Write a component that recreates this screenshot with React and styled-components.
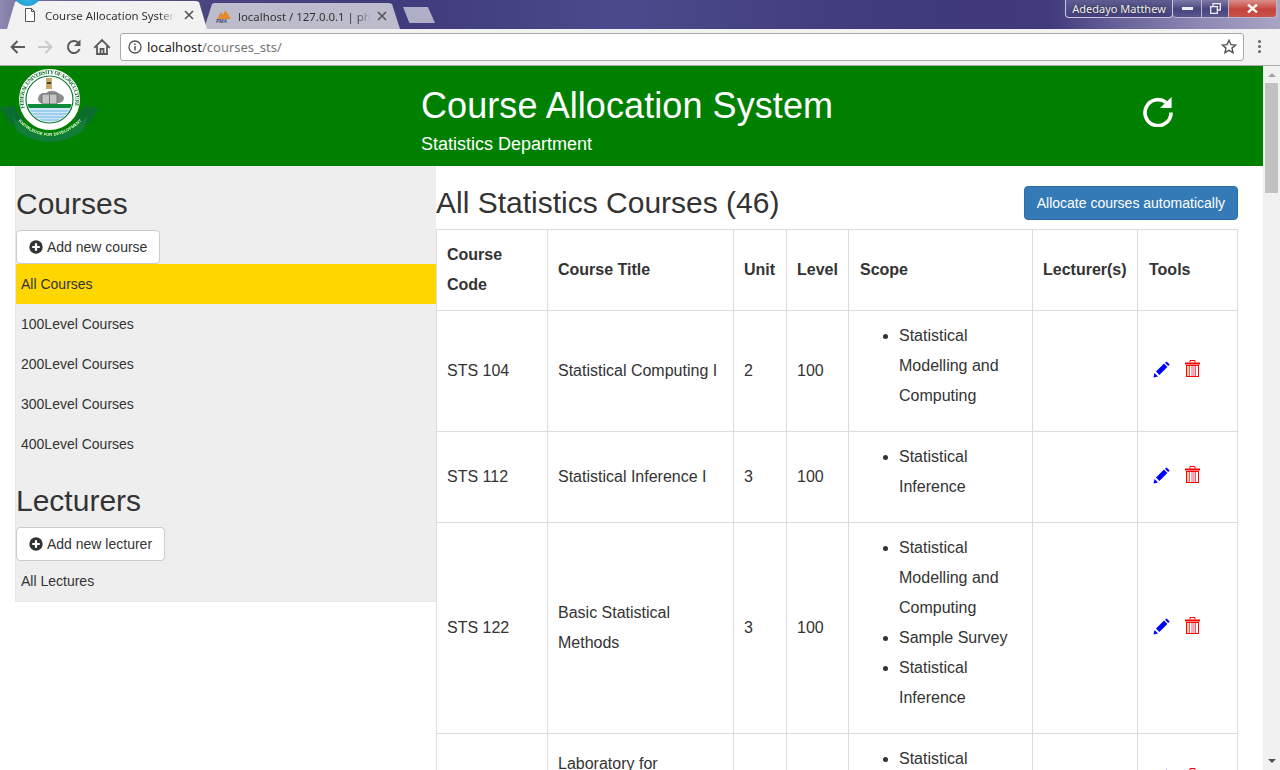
import React from "react";
import styled, { createGlobalStyle } from "styled-components";

const Global = createGlobalStyle`
  html, body { margin: 0; padding: 0; height: 100%; overflow: hidden; background: #fff; }
  * { box-sizing: border-box; }
  #root { height: 100%; }
`;

const Frame = styled.div`
  width: 1280px; height: 770px; overflow: hidden; display: flex; flex-direction: column;
  font-family: "Liberation Sans", Arial, sans-serif; color: #333;
`;
const TitleBar = styled.div`
  position: relative; height: 29px; flex: none; display: flex; align-items: flex-end; padding-left: 7px;
  background: linear-gradient(90deg, #8d89b0 0, #6f6a9e 30px, #4a4580 210px, #3f3b7c 400px, #4c4a8c 620px, #3f3a7a 900px, #40397c 1050px, #68639a 1120px, #8d88b4 1200px, #a9a5c4 1280px);
`;
const Orb = styled.div`
  position: absolute; left: 13px; top: -23px; width: 29px; height: 29px; border-radius: 50%; z-index: 3;
  background: radial-gradient(circle at 50% 70%, #35b6e6, #0f7fb8);
`;
const Tab = styled.div`
  position: relative; height: ${p => p.$active ? 28 : 26}px; width: ${p => p.$active ? 200 : 196}px;
  margin-left: ${p => p.$active ? 0 : -3}px; padding: 0 13px 0 ${p => p.$active ? 17 : 12}px;
  display: flex; align-items: center; gap: ${p => p.$active ? 9 : 6}px;
  clip-path: polygon(0 100%, 8px 4%, 10px 0, calc(100% - 11px) 0, calc(100% - 8px) 4%, 100% 100%);
  background: ${p => p.$active ? "#f2f2f2" : "#bdbccd"};
  z-index: ${p => p.$active ? 2 : 1};
  font: 11.4px "Noto Sans", "Open Sans", sans-serif; color: #333;
`;
const TabLabel = styled.span`
  flex: 1; min-width: 0; white-space: nowrap; overflow: hidden;
  -webkit-mask-image: linear-gradient(90deg, #000 88%, transparent 100%);
  mask-image: linear-gradient(90deg, #000 88%, transparent 100%);
`;
const NewTab = styled.div`
  width: 32px; height: 16px; margin: 0 0 6px 3px; background: #aeaec6;
  clip-path: polygon(0 0, 78% 0, 100% 100%, 20% 100%);
`;
const Spacer = styled.div`flex: 1;`;
const WinGroup = styled.div`
  align-self: flex-start; display: flex; height: 18px; margin-right: 3px;
`;
const UserBadge = styled.div`
  width: 108px; height: 18px; border: 1px solid #c9c8dc; border-top: none; border-radius: 0 0 4px 4px;
  background: linear-gradient(#5f5c92, #44417e);
  font: 11px "Noto Sans", sans-serif; color: #eee; text-align: center; line-height: 17px;
  text-shadow: 0 0 3px #222;
`;
const WinBtn = styled.div`
  width: ${p => p.$w}px; height: 18px; border: 1px solid #b9b8d0; border-top: none; border-left: none;
  border-radius: 0 0 ${p => p.$end ? 4 : 0}px ${p => p.$first ? 4 : 0}px;
  display: flex; align-items: center; justify-content: center;
  background: ${p => p.$close ? "linear-gradient(#d9908a 0, #c6443a 55%, #c9524a 100%)" : "linear-gradient(#7d7aa6, #47447f 55%, #5a578d)"};
`;
const Toolbar = styled.div`
  height: 37px; flex: none; display: flex; align-items: center; padding: 0 6px 1px 0;
  background: #f2f2f2; border-bottom: 1px solid #a9a9a9;
`;
const NavIcon = styled.svg`
  width: 18px; height: 18px; flex: none; margin-left: ${p => p.$ml}px;
`;
const Omnibox = styled.div`
  margin-left: ${p => p.$ml}px; width: 1124px; height: 28px; display: flex; align-items: center; padding: 0 6px 0 7px; gap: 5px;
  background: #fff; border: 1px solid #a9a9a9; border-radius: 3px;
  font: 13px "Noto Sans", "Open Sans", sans-serif; color: #777;
`;
const Host = styled.span`color: #222;`;
const Url = styled.span`flex: 1;`;
const Dots = styled.div`
  margin-left: 14px; display: flex; flex-direction: column; gap: 2px;
  & > i { width: 3px; height: 3px; border-radius: 50%; background: #666; display: block; }
`;
const Viewport = styled.div`flex: 1; min-height: 0; display: flex;`;
const Page = styled.div`flex: 1; min-width: 0; overflow: hidden;`;
const Scrollbar = styled.div`
  width: 17px; flex: none; background: #f1f1f1; display: flex; flex-direction: column; align-items: center; justify-content: space-between; position: relative;
`;
const ArrowBtn = styled.div`
  width: 0; height: 0; margin: 7px 0; border-left: 4px solid transparent; border-right: 4px solid transparent;
  ${p => p.$up ? "border-bottom: 4px solid #a3a3a3;" : "border-top: 4px solid #505050;"}
`;
const Thumb = styled.div`
  position: absolute; left: 2px; top: 17px; width: 13px; height: 110px; background: #c1c1c1;
`;
const Banner = styled.header`
  height: 100px; background: #008000; display: flex; color: #fff;
`;
const LogoBox = styled.div`width: 421px; flex: none; padding-top: 1px;`;
const BannerText = styled.div`width: 722px; flex: none; padding-top: 20px;`;
const BannerTitle = styled.h1`
  margin: 0; font-size: 36px; font-weight: 400; line-height: 40px; letter-spacing: 0.08px;
`;
const BannerSub = styled.div`
  margin-top: 8px; font-size: 18px; line-height: 20px;
`;
const RefreshBox = styled.div`padding-top: 31px;`;
const Body = styled.div`display: flex; align-items: flex-start; padding-left: 15px;`;
const Sidebar = styled.aside`
  width: 421px; flex: none; background: #eee; border: 1px solid #e7e7e7; border-right: none; border-top-color: #eee;
`;
const SideTitle = styled.h2`
  margin: 20px 0 10px; padding-left: 0; font-size: 30px; font-weight: 500; line-height: 33px; color: #333;
`;
const Btn = styled.button`
  display: inline-flex; align-items: center; height: 34px; padding: 0 12px; gap: 4px; vertical-align: top;
  font: 14px "Liberation Sans", Arial, sans-serif; color: #333; background: #fff;
  border: 1px solid #ccc; border-radius: 4px; margin: 0;
`;
const PrimaryBtn = styled(Btn)`
  background: #337ab7; border-color: #2e6da4; color: #fff;
`;
const SideItem = styled.div`
  height: 40px; padding-left: 5px; font-size: 14px; line-height: 40px; color: #333;
  background: ${p => p.$active ? "#ffd700" : "transparent"};
`;
const Main = styled.main`width: 802px; flex: none; padding-top: 20px;`;
const MainHead = styled.div`
  display: flex; justify-content: space-between; align-items: center; height: 34px; margin-bottom: 9px;
`;
const MainTitle = styled.h2`
  margin: 0 0 2px; font-size: 30px; font-weight: 500; line-height: 33px; color: #333;
`;
const Table = styled.table`
  width: 801px; table-layout: fixed; border-collapse: collapse; font-size: 16px; line-height: 30px; color: #333;
`;
const Th = styled.th`
  border: 1px solid #ddd; padding: 10px; text-align: left; font-weight: 700; vertical-align: middle;
  padding-left: ${p => p.$nudge ? 11 : 10}px;
`;
const Td = styled.td`
  border: 1px solid #ddd; padding: 10px; vertical-align: middle;
`;
const Scope = styled.ul`margin: 0 0 10px; padding-left: 40px;`;
const Tools = styled.div`display: flex; align-items: center; gap: 15px; padding: 0 0 4px 5px;`;

const Pencil = () => (
  <svg width="17" height="17" viewBox="0 0 17 17" style={{ flex: "none" }}>
    <path d="M0.5 16.5 L1.5 12 L5 15.5 Z" fill="#00f" />
    <path d="M3 10.6 L11 2.6 L14.4 6 L6.4 14 Z" fill="#00f" />
    <path d="M12 1.8 L13.6 0.4 L16.6 3.4 L15.2 5 Z" fill="#00f" />
  </svg>
);
const Trash = () => (
  <svg width="15" height="18" viewBox="0 0 15 18" style={{ flex: "none" }}>
    <path d="M5 2.5 V0.5 H10 V2.5" fill="none" stroke="#f00" />
    <rect x="0" y="2.5" width="15" height="2" fill="#f00" />
    <rect x="1.5" y="5.5" width="12" height="11" fill="#fff" stroke="#f00" />
    <path d="M3 6 V16" stroke="#fdc48c" strokeWidth="1.4" />
    <path d="M4.5 6 V16 M7 6 V16 M10.5 6 V16" stroke="#f55" strokeWidth="1" />
    <path d="M8.8 6 V16" stroke="#f9c" strokeWidth="1.6" />
  </svg>
);
const PlusSign = () => (
  <svg width="14" height="14" viewBox="0 0 14 14" style={{ flex: "none", marginTop: -1 }}>
    <circle cx="7" cy="7" r="6.7" fill="#333" />
    <path d="M7 3.2 V10.8 M3.2 7 H10.8" stroke="#fff" strokeWidth="2.2" />
  </svg>
);
const Refresh = () => (
  <svg width="30" height="30" viewBox="0 0 30 30" style={{ display: "block" }}>
    <path d="M28 15.5 A13 13 0 1 1 23 5.4" fill="none" stroke="#fff" strokeWidth="3.6" />
    <path d="M28.6 0 V11 H17 Z" fill="#fff" />
  </svg>
);
const Logo = () => (
  <svg width="100" height="76" viewBox="0 0 100 76" style={{ display: "block", filter: "blur(0.35px)" }}>
    <defs>
      <path id="ringPath" d="M 24.76 41 A 26 26 0 1 1 74.24 41" />
      <path id="ribbonPath" d="M 16 52 Q 49 86 84 52" />
      <clipPath id="lens"><circle cx="49.5" cy="32.5" r="22.5" /></clipPath>
    </defs>
    <path d="M0 40 L14 39 L24 53 L16 60 L9 55 Z" fill="#0c6e2e" />
    <path d="M99 41 L85 39 L75 53 L83 60 L90 55 Z" fill="#0c6e2e" />
    <path d="M12 49 Q49 90 88 49 L83 64 Q49 86 17 64 Z" fill="#127d38" />
    <circle cx="49.5" cy="32.5" r="30.5" fill="#fff" />
    <circle cx="49.5" cy="32.5" r="23.5" fill="#fff" stroke="#0a7a30" strokeWidth="1.2" />
    <text fontFamily="Liberation Serif, serif" fontSize="5.6" fontWeight="700" fill="#126b2f">
      <textPath href="#ringPath" textLength="96">FEDERAL UNIVERSITY OF AGRICULTURE</textPath>
    </text>
    <g clipPath="url(#lens)">
      <rect x="46" y="11" width="6" height="11" fill="#c8a96a" />
      <rect x="47" y="15" width="4" height="2" fill="#443" />
      <path d="M38 33 Q38 25 46 26 Q52 21 60 27 Q66 29 63 34 L60 36 H40 Z" fill="#8d8d8d" />
      <rect x="42" y="27" width="15" height="10" fill="#c5c5c5" stroke="#666" strokeWidth="0.8" />
      <path d="M49.5 27 V37" stroke="#666" strokeWidth="0.8" />
      <rect x="24" y="37" width="52" height="4" fill="#0f8a3a" />
      <rect x="24" y="41" width="52" height="16" fill="#cfe6f6" />
      <path d="M28 44 H71 M28 47 H71 M30 50 H69 M34 53 H65" stroke="#6cb4e4" strokeWidth="1" />
    </g>
    <text fontFamily="Liberation Sans, sans-serif" fontSize="4.2" fontWeight="700" fill="#e8f4ea">
      <textPath href="#ribbonPath" startOffset="4%" textLength="72">KNOWLEDGE FOR DEVELOPMENT</textPath>
    </text>
  </svg>
);

const rows = [
  { code: "STS 104", title: "Statistical Computing I", unit: 2, level: 100, scope: ["Statistical Modelling and Computing"] },
  { code: "STS 112", title: "Statistical Inference I", unit: 3, level: 100, scope: ["Statistical Inference"] },
  { code: "STS 122", title: "Basic Statistical Methods", unit: 3, level: 100, scope: ["Statistical Modelling and Computing", "Sample Survey", "Statistical Inference"] },
  { code: "STS 124", title: "Laboratory for Statistical", unit: 1, level: 100, scope: ["Statistical Computing"] },
];
const widths = [111, 186, 53, 62, 184, 105, 100];
const levels = ["All Courses", "100Level Courses", "200Level Courses", "300Level Courses", "400Level Courses"];

export default function App() {
  return (
    <Frame>
      <Global />
      <TitleBar>
        <Orb />
        <Tab $active>
          <svg width="12" height="14" viewBox="0 0 12 14" style={{ flex: "none" }}>
            <path d="M1.5 0.5 H7.5 L10.5 3.5 V13.5 H1.5 Z M7.5 0.5 V3.5 H10.5" fill="#fff" stroke="#555" />
          </svg>
          <TabLabel>Course Allocation System</TabLabel>
          <svg width="10" height="10" viewBox="0 0 10 10" style={{ flex: "none" }}>
            <path d="M1 1 L9 9 M9 1 L1 9" stroke="#555" strokeWidth="1.6" />
          </svg>
        </Tab>
        <Tab>
          <svg width="16" height="13" viewBox="0 0 16 13" style={{ flex: "none" }}>
            <path d="M1 9 L5 2 L7 5 L9 0.5 L12 4 L15 9 Z" fill="#e28a2c" />
            <text x="0" y="13" fontSize="5" fontWeight="700" fontStyle="italic" fontFamily="Liberation Sans" fill="#3a4c80">PMA</text>
          </svg>
          <TabLabel>localhost / 127.0.0.1 | phpMyAdmin</TabLabel>
          <svg width="10" height="10" viewBox="0 0 10 10" style={{ flex: "none" }}>
            <path d="M1 1 L9 9 M9 1 L1 9" stroke="#555" strokeWidth="1.6" />
          </svg>
        </Tab>
        <NewTab />
        <Spacer />
        <WinGroup>
          <UserBadge>Adedayo Matthew</UserBadge>
          <WinBtn $w={29} $first>
            <svg width="11" height="5" viewBox="0 0 11 5"><rect y="1" width="11" height="3" fill="#eee" /></svg>
          </WinBtn>
          <WinBtn $w={27}>
            <svg width="11" height="11" viewBox="0 0 11 11"><path d="M3 3 V0.7 H10.3 V7 H8 M0.7 3.7 H7.3 V10.3 H0.7 Z" fill="none" stroke="#eee" strokeWidth="1.3" /></svg>
          </WinBtn>
          <WinBtn $w={48} $close $end>
            <svg width="11" height="9" viewBox="0 0 11 9"><path d="M1 0.5 L10 8.5 M10 0.5 L1 8.5" stroke="#f4f4f4" strokeWidth="2.4" /></svg>
          </WinBtn>
        </WinGroup>
      </TitleBar>
      <Toolbar>
        <NavIcon $ml={9} viewBox="0 0 18 18"><path d="M16 9 H3 M8.5 3 L2.6 9 L8.5 15" fill="none" stroke="#5a5a5a" strokeWidth="2" /></NavIcon>
        <NavIcon $ml={9} viewBox="0 0 18 18"><path d="M2 9 H15 M9.5 3 L15.4 9 L9.5 15" fill="none" stroke="#c9c9c9" strokeWidth="2" /></NavIcon>
        <NavIcon $ml={11} viewBox="0 0 18 18">
          <path d="M14.6 11 A6 6 0 1 1 13.2 4.8" fill="none" stroke="#5a5a5a" strokeWidth="2" />
          <path d="M15.5 1.5 V8 H9 Z" fill="#5a5a5a" />
        </NavIcon>
        <NavIcon $ml={10} viewBox="0 0 18 18"><path d="M1.2 9.8 L9 2 L16.8 9.8 M4 8 V16 H14 V8 M7.5 16 V11 H10.5 V16" fill="none" stroke="#5a5a5a" strokeWidth="1.8" /></NavIcon>
        <Omnibox $ml={9}>
          <svg width="14" height="14" viewBox="0 0 14 14" style={{ flex: "none" }}>
            <circle cx="7" cy="7" r="6" fill="none" stroke="#555" strokeWidth="1.3" />
            <path d="M7 6 V10.5 M7 3.4 V5" stroke="#555" strokeWidth="1.5" />
          </svg>
          <Url><Host>localhost</Host>/courses_sts/</Url>
          <svg width="16" height="15" viewBox="0 0 16 15" style={{ flex: "none" }}>
            <path d="M8 1.3 L9.9 5.6 L14.6 6 L11 9.1 L12.1 13.7 L8 11.3 L3.9 13.7 L5 9.1 L1.4 6 L6.1 5.6 Z" fill="none" stroke="#555" strokeWidth="1.4" />
          </svg>
        </Omnibox>
        <Dots><i /><i /><i /></Dots>
      </Toolbar>
      <Viewport>
        <Page>
          <Banner>
            <LogoBox><Logo /></LogoBox>
            <BannerText>
              <BannerTitle>Course Allocation System</BannerTitle>
              <BannerSub>Statistics Department</BannerSub>
            </BannerText>
            <RefreshBox><Refresh /></RefreshBox>
          </Banner>
          <Body>
            <Sidebar>
              <SideTitle>Courses</SideTitle>
              <Btn><PlusSign /> Add new course</Btn>
              {levels.map((l, i) => <SideItem key={l} $active={i === 0}>{l}</SideItem>)}
              <SideTitle>Lecturers</SideTitle>
              <Btn><PlusSign /> Add new lecturer</Btn>
              <SideItem>All Lectures</SideItem>
            </Sidebar>
            <Main>
              <MainHead>
                <MainTitle>All Statistics Courses (46)</MainTitle>
                <PrimaryBtn>Allocate courses automatically</PrimaryBtn>
              </MainHead>
              <Table>
                <colgroup>{widths.map((w, i) => <col key={i} style={{ width: w }} />)}</colgroup>
                <thead>
                  <tr>
                    <Th>Course Code</Th><Th>Course Title</Th><Th>Unit</Th><Th>Level</Th><Th $nudge>Scope</Th><Th>Lecturer(s)</Th><Th $nudge>Tools</Th>
                  </tr>
                </thead>
                <tbody>
                  {rows.map(r => (
                    <tr key={r.code}>
                      <Td>{r.code}</Td>
                      <Td>{r.title}</Td>
                      <Td>{r.unit}</Td>
                      <Td>{r.level}</Td>
                      <Td><Scope>{r.scope.map(s => <li key={s}>{s}</li>)}</Scope></Td>
                      <Td></Td>
                      <Td><Tools><Pencil /><Trash /></Tools></Td>
                    </tr>
                  ))}
                </tbody>
              </Table>
            </Main>
          </Body>
        </Page>
        <Scrollbar>
          <ArrowBtn $up />
          <Thumb />
          <ArrowBtn />
        </Scrollbar>
      </Viewport>
    </Frame>
  );
}
